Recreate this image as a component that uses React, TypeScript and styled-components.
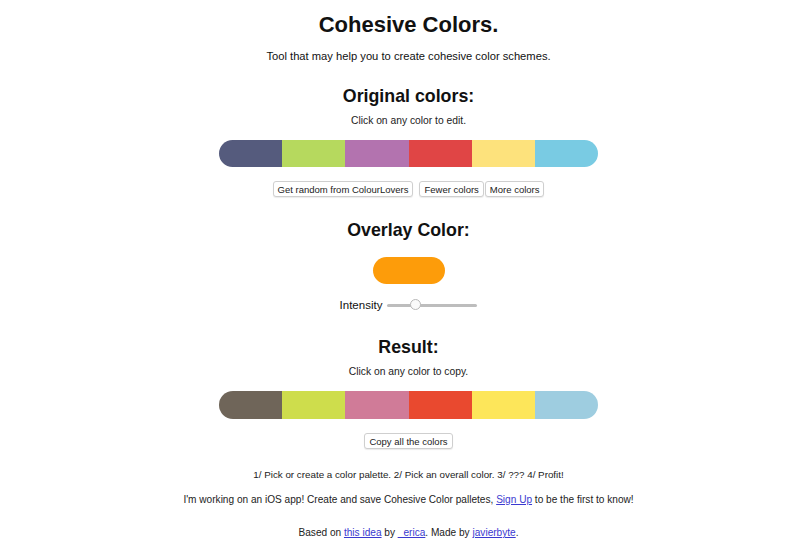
import React from "react";
import styled, { createGlobalStyle } from "styled-components";

const Global = createGlobalStyle`
  html, body { margin: 0; padding: 0; background: #fff; }
  body { font-family: "Liberation Sans", Arial, Helvetica, sans-serif; color: #111; }
`;

const Page = styled.div`
  display: flex;
  flex-direction: column;
  align-items: center;
  text-align: center;
  padding-top: 11px;
  padding-left: 17px;
`;

const Title = styled.h1`
  font-size: 22px;
  font-weight: bold;
  margin: 0;
  line-height: 28px;
`;

const Sub = styled.p`
  font-size: 11.2px;
  margin: 9px 0 0;
  line-height: 16px;
`;

const Heading = styled.h2<{ $mt: number }>`
  font-size: 17.8px;
  font-weight: bold;
  margin: ${(p) => p.$mt}px 0 0;
  line-height: 24px;
`;

const Hint = styled.p`
  font-size: 10.3px;
  margin: 6px 0 0;
  line-height: 14px;
  color: #222;
`;

const Bar = styled.div<{ $mt: number; $h?: number }>`
  display: flex;
  width: 379px;
  height: ${(p) => p.$h ?? 27}px;
  border-radius: 14px;
  overflow: hidden;
  margin-top: ${(p) => p.$mt}px;
`;

const Swatch = styled.div<{ $c: string }>`
  flex: 1;
  background: ${(p) => p.$c};
  cursor: pointer;
`;

const Buttons = styled.div<{ $mt: number }>`
  display: flex;
  gap: 1px;
  margin-top: ${(p) => p.$mt}px;
`;

const Btn = styled.button<{ $ml?: number }>`
  font-family: "Liberation Sans", Arial, sans-serif;
  font-size: 9.5px;
  height: 16px;
  padding: 0 4px;
  margin: 0 0 0 ${(p) => p.$ml ?? 0}px;
  background: #fff;
  border: 1px solid #cfcfcf;
  border-radius: 3px;
  color: #222;
  box-shadow: 0 1px 1px rgba(0, 0, 0, 0.08);
`;

const Overlay = styled.div`
  width: 72px;
  height: 27px;
  border-radius: 14px;
  background: #fd9c0a;
  margin-top: 15px;
`;

const IntensityRow = styled.label`
  display: flex;
  align-items: center;
  gap: 5px;
  font-size: 11.5px;
  margin-top: 15px;
`;

const Track = styled.div`
  position: relative;
  width: 90px;
  height: 3px;
  border-radius: 2px;
  background: #bdbdbd;
`;

const Thumb = styled.div`
  position: absolute;
  left: 23px;
  top: -5px;
  width: 11px;
  height: 11px;
  border-radius: 50%;
  background: #fafafa;
  border: 1px solid #b8b8b8;
  box-sizing: border-box;
`;

const Note = styled.p<{ $mt: number; $fs?: number }>`
  font-size: ${(p) => p.$fs ?? 10.1}px;
  margin: ${(p) => p.$mt}px 0 0;
  line-height: 14px;
  color: #222;
`;

const A = styled.a`
  color: #3a3ad0;
  text-decoration: underline;
`;

const original = ["#555b7d", "#b6d95e", "#b373af", "#e04545", "#fde27c", "#79cbe3"];
const result = ["#6f6559", "#cedd4c", "#d07b98", "#e9492f", "#fde65a", "#9ecde0"];

export default function App() {
  return (
    <>
      <Global />
      <Page>
        <Title>Cohesive Colors.</Title>
        <Sub>Tool that may help you to create cohesive color schemes.</Sub>
        <Heading $mt={20}>Original colors:</Heading>
        <Hint>Click on any color to edit.</Hint>
        <Bar $mt={12}>
          {original.map((c) => (
            <Swatch key={c} $c={c} />
          ))}
        </Bar>
        <Buttons $mt={14}>
          <Btn>Get random from ColourLovers</Btn>
          <Btn $ml={5}>Fewer colors</Btn>
          <Btn>More colors</Btn>
        </Buttons>
        <Heading $mt={21}>Overlay Color:</Heading>
        <Overlay />
        <IntensityRow>
          Intensity
          <Track>
            <Thumb />
          </Track>
        </IntensityRow>
        <Heading $mt={24}>Result:</Heading>
        <Hint>Click on any color to copy.</Hint>
        <Bar $mt={12} $h={28}>
          {result.map((c) => (
            <Swatch key={c} $c={c} />
          ))}
        </Bar>
        <Buttons $mt={14}>
          <Btn>Copy all the colors</Btn>
        </Buttons>
        <Note $mt={19} $fs={9.8}>1/ Pick or create a color palette. 2/ Pick an overall color. 3/ ??? 4/ Profit!</Note>
        <Note $mt={11}>
          I'm working on an iOS app! Create and save Cohesive Color palletes, <A href="#">Sign Up</A> to be the first to know!
        </Note>
        <Note $mt={19}>
          Based on <A href="#">this idea</A> by <A href="#">_erica</A>. Made by <A href="#">javierbyte</A>.
        </Note>
      </Page>
    </>
  );
}
